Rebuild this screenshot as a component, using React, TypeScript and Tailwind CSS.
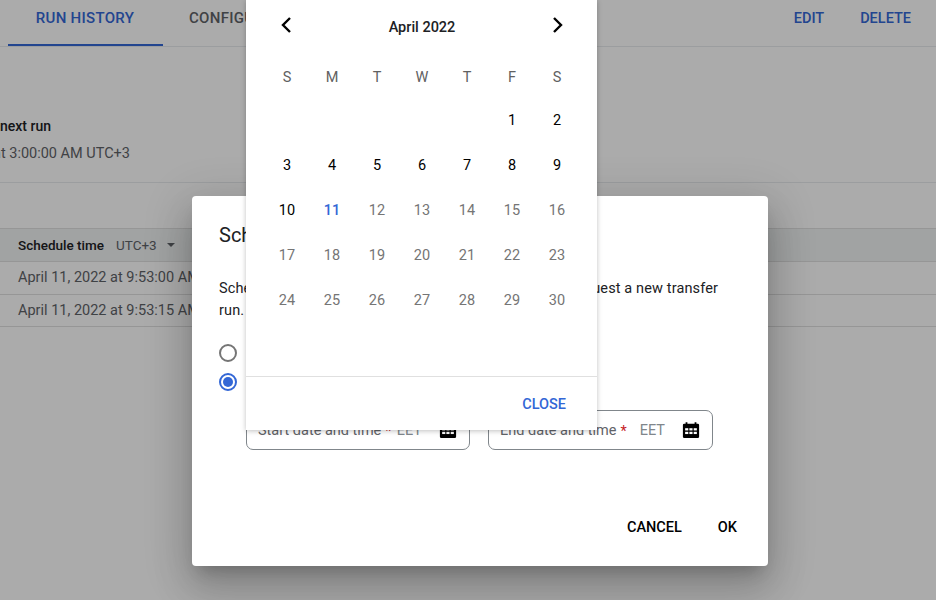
import React from 'react';

const weeks: (number | null)[][] = [
  [null, null, null, null, null, 1, 2],
  [3, 4, 5, 6, 7, 8, 9],
  [10, 11, 12, 13, 14, 15, 16],
  [17, 18, 19, 20, 21, 22, 23],
  [24, 25, 26, 27, 28, 29, 30],
];

const CalendarIcon = () => (
  <svg width="18" height="18" viewBox="0 0 20 20" className="shrink-0">
    <path fill="#000" d="M4 1.5h2V3h8V1.5h2V3h1.5A1.5 1.5 0 0 1 19 4.500V17.500A1.500 1.500 0 0 1 17.500 19H2.500A1.500 1.500 0 0 1 1 17.500V4.500A1.500 1.500 0 0 1 2.500 3H4z" />
    <g fill="#fff">
      <rect x="3.500" y="8" width="3.500" height="2.500" />
      <rect x="8.200" y="8" width="3.500" height="2.500" />
      <rect x="13" y="8" width="3.500" height="2.500" />
      <rect x="3.500" y="12" width="3.500" height="2.500" />
      <rect x="8.200" y="12" width="3.500" height="2.500" />
      <rect x="13" y="12" width="3.500" height="2.500" />
    </g>
  </svg>
);

const Chevron = ({ dir }: { dir: 'left' | 'right' }) => (
  <svg width="12" height="18" viewBox="0 0 12 18" className="-mt-[5px]">
    <path d={dir === 'left' ? 'M10 2 3 9l7 7' : 'M2 2l7 7-7 7'} fill="none" stroke="#000" strokeWidth="2.400" />
  </svg>
);

const DateField = ({ label, className }: { label: string; className: string }) => (
  <div className={`${className} h-[40px] flex items-center pl-[11px] pr-[12px] border border-[#80868b] rounded-[7px]`}>
    <span className="mt-[2px] text-[14.5px] text-[#5f6368] whitespace-nowrap">{label}</span>
    <span className="mt-[3px] text-[14.5px] text-[#c5221f] ml-1">*</span>
    <span className="mt-[2px] ml-auto text-[14.5px] text-[#80868b]">EET</span>
    <span className="ml-[17px]"><CalendarIcon /></span>
  </div>
);

export default function App() {
  return (
    <div className="relative w-[936px] h-[600px] overflow-hidden bg-white font-['Roboto',sans-serif]">
      {/* page behind the dialog */}
      <div className="flex justify-between h-[47px] border-b border-[#e8eaed]">
        <div className="flex pl-2">
          <div className="w-[155px] h-[46px] pt-[7px] pr-[1px] text-center text-[15px] tracking-[0.3px] font-medium text-[#3367d6] border-b-2 border-[#3367d6]">RUN HISTORY</div>
          <div className="ml-[26px] pt-[7px] text-[15px] tracking-[0.3px] font-medium text-[#5f6368]">CONFIGURATION</div>
        </div>
        <div className="flex gap-9 pt-[8px] pr-[25px] text-[14.5px] font-medium text-[#3367d6]">
          <span>EDIT</span>
          <span>DELETE</span>
        </div>
      </div>
      <div className="h-[136px] border-b border-[#e8eaed] pt-[69px] whitespace-nowrap">
        <div className="text-sm font-medium text-[#202124]">next run</div>
        <div className="mt-[7px] -ml-[7px] text-[14.5px] text-[#5f6368]">at 3:00:00 AM UTC+3</div>
      </div>
      <div className="h-[45px]" />
      <div className="h-[34px] flex items-center pl-[18px] bg-[#f1f3f4] border-y border-[#e0e0e0]">
        <span className="text-[13.5px] font-medium text-[#202124]">Schedule time</span>
        <span className="ml-[12px] text-[13.5px] text-[#5f6368]">UTC+3</span>
        <span className="ml-[10px] w-0 h-0 border-x-[4px] border-x-transparent border-t-[4px] border-t-[#5f6368]" />
      </div>
      <div className="h-[33px] flex items-center pl-[18px] border-b border-[#e0e0e0] text-[14.5px] text-[#5f6368]">April 11, 2022 at 9:53:00 AM</div>
      <div className="h-[32px] flex items-center pl-[18px] border-b border-[#e0e0e0] text-[14.5px] text-[#5f6368]">April 11, 2022 at 9:53:15 AM</div>

      {/* scrim */}
      <div className="absolute inset-0 bg-black/33" />

      {/* dialog */}
      <div className="absolute left-[192px] top-[196px] w-[576px] h-[370px] bg-white rounded-[4px] shadow-[0_11px_15px_-7px_rgba(0,0,0,0.2),0_24px_38px_3px_rgba(0,0,0,0.14),0_9px_46px_8px_rgba(0,0,0,0.12)] px-[27px] flex flex-col">
        <h2 className="mt-[27px] text-xl leading-6 text-[#202124]">Schedule a backfill</h2>
        <p className="mt-[31px] w-[510px] text-[14.5px] tracking-[0.13px] leading-[22px] text-[#202124]">Schedule a historical data backfill for a date range, or request a new transfer run.</p>
        <div className="mt-[22px] flex flex-col gap-[11px]">
          <span className="w-[18px] h-[18px] rounded-full border-2 border-[#757575]" />
          <span className="w-[18px] h-[18px] rounded-full border-2 border-[#3367d6] flex items-center justify-center">
            <span className="w-[10px] h-[10px] rounded-full bg-[#3367d6]" />
          </span>
        </div>
        <div className="mt-[19px] ml-[27px] flex gap-[18px]">
          <DateField label="Start date and time" className="w-[224px]" />
          <DateField label="End date and time" className="w-[225px]" />
        </div>
        <div className="mt-auto mb-[27px] flex justify-end gap-9 pr-[4px] text-[14.5px] font-medium text-[#000]">
          <span>CANCEL</span>
          <span>OK</span>
        </div>
      </div>

      {/* date picker popup */}
      <div className="absolute left-[246px] top-0 w-[351px] h-[430px] bg-white shadow-[0_1px_5px_rgba(0,0,0,0.25)] flex flex-col">
        <div className="h-[55px] flex items-center justify-between pl-[34px] pr-[33px]">
          <Chevron dir="left" />
          <span className="text-[14.5px] font-medium text-[#202124]">April 2022</span>
          <Chevron dir="right" />
        </div>
        <div className="grid grid-cols-[repeat(7,45px)] pl-[18.500px] h-[45px] items-center text-[14.5px] text-[#616161] text-center">
          {['S', 'M', 'T', 'W', 'T', 'F', 'S'].map((d, i) => (
            <span key={i}>{d}</span>
          ))}
        </div>
        <div className="-mt-[2px] grid grid-cols-[repeat(7,45px)] auto-rows-[45px] pl-[18.500px] items-center text-[14.5px] text-center">
          {weeks.flat().map((d, i) => (
            <span
              key={i}
              className={d === 11 ? 'font-medium text-[#3367d6]' : d !== null && d <= 10 ? 'text-[#000]' : 'text-[#757575]'}
            >
              {d}
            </span>
          ))}
        </div>
        <div className="mt-auto h-[54px] pt-[2px] border-t border-[#e0e0e0] flex items-center justify-end pr-[31px] text-[14.5px] font-medium text-[#3367d6]">
          CLOSE
        </div>
      </div>
    </div>
  );
}
